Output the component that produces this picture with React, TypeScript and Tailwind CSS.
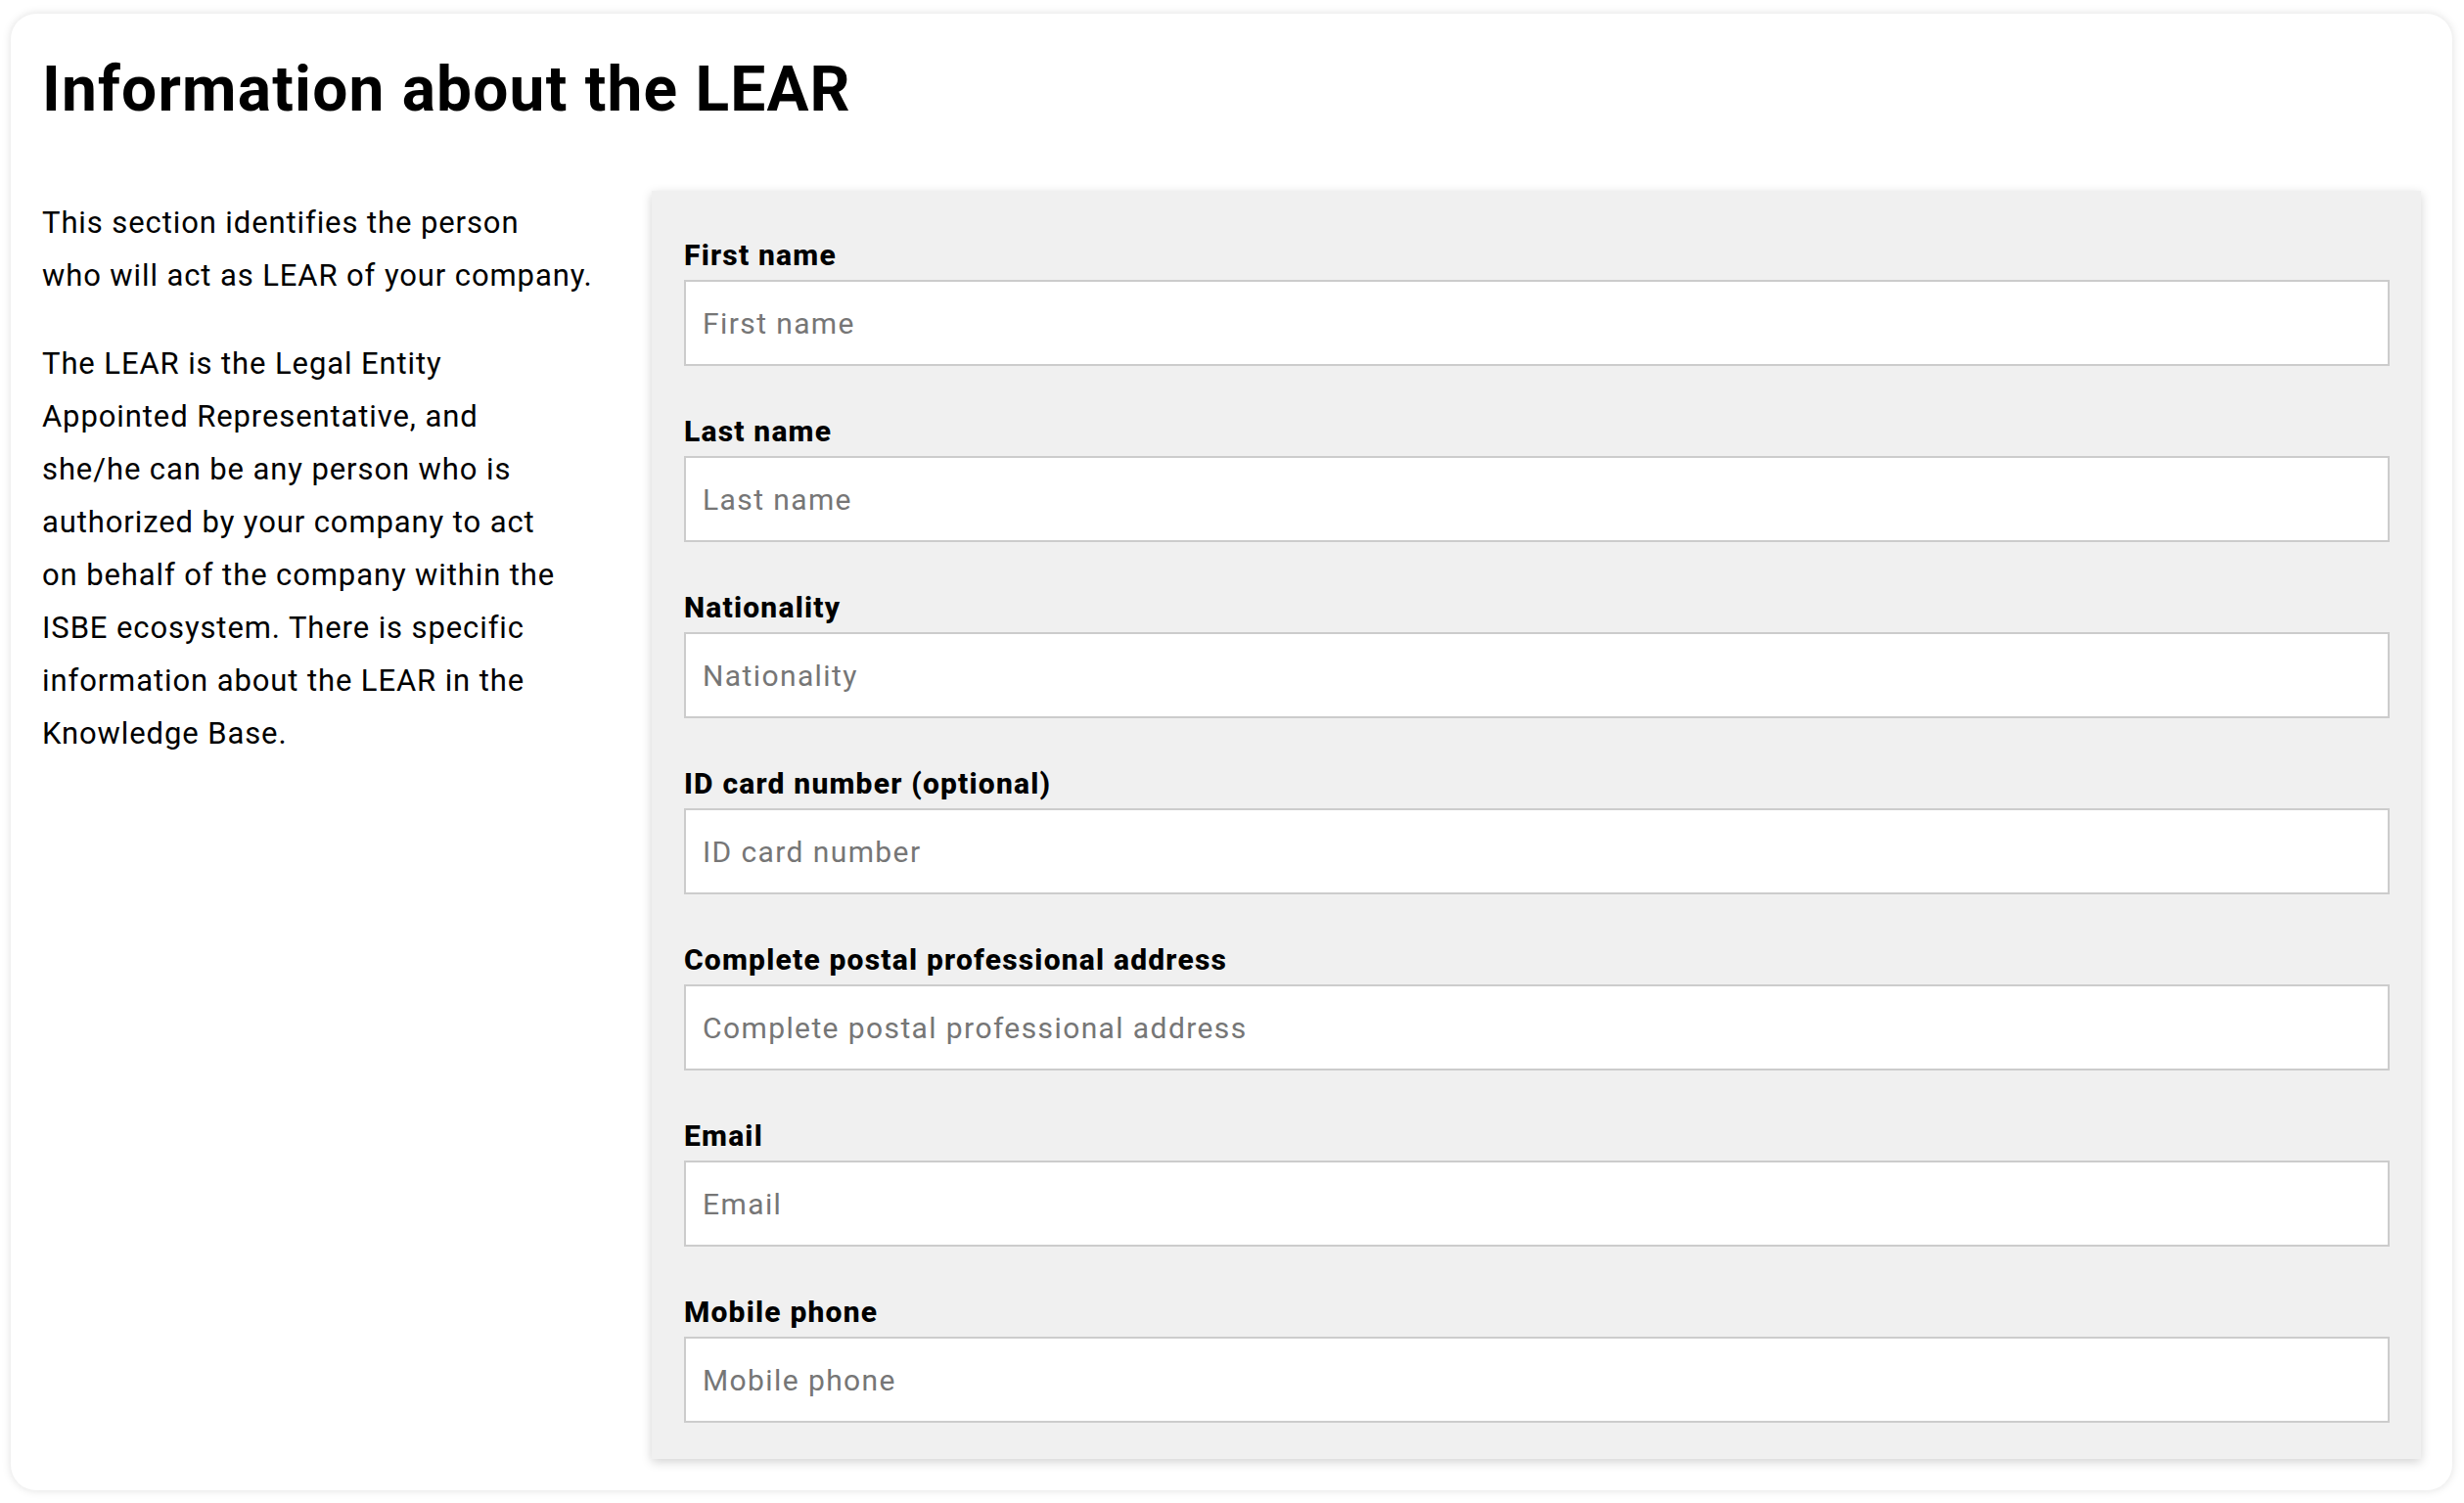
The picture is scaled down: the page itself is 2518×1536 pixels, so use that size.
import React from "react";

const fields = [
  { label: "First name", placeholder: "First name" },
  { label: "Last name", placeholder: "Last name" },
  { label: "Nationality", placeholder: "Nationality" },
  { label: "ID card number (optional)", placeholder: "ID card number" },
  { label: "Complete postal professional address", placeholder: "Complete postal professional address" },
  { label: "Email", placeholder: "Email" },
  { label: "Mobile phone", placeholder: "Mobile phone" },
];

function Field({ label, placeholder }: { label: string; placeholder: string }) {
  return (
    <div className="flex flex-col">
      <label className="block text-[30px] leading-[36px] font-extrabold tracking-[1.2px] text-black whitespace-nowrap">
        {label}
      </label>
      <input
        type="text"
        placeholder={placeholder}
        className="mt-[7px] h-[88px] w-full border-2 border-[#cccccc] bg-white px-[17px] text-[30px] tracking-[1.4px] text-black outline-none placeholder:text-[#767676]"
      />
    </div>
  );
}

export default function App() {
  return (
    <div className="min-h-screen bg-white pt-[14px] pl-[11px] pr-[12px] pb-[13px] font-['Roboto',sans-serif]">
      <div className="rounded-[26px] bg-white px-[32px] pt-[46px] pb-[32px] shadow-[0_0_10px_rgba(0,0,0,0.13)]">
        <h1 className="text-[64px] leading-[64px] font-bold tracking-[1.2px] text-black">Information about the LEAR</h1>
        <div className="mt-[71px] flex">
          <div className="w-[623px] shrink-0 pt-[6px] text-[31px] leading-[54px] tracking-[0.9px] text-black">
            <p className="whitespace-nowrap">
              This section identifies the person
              <br />
              who will act as LEAR of your company.
            </p>
            <p className="mt-[36px] whitespace-nowrap">
              The LEAR is the Legal Entity
              <br />
              Appointed Representative, and
              <br />
              she/he can be any person who is
              <br />
              authorized by your company to act
              <br />
              on behalf of the company within the
              <br />
              ISBE ecosystem. There is specific
              <br />
              information about the LEAR in the
              <br />
              Knowledge Base.
            </p>
          </div>
          <div className="flex flex-1 flex-col gap-[49px] bg-[#f0f0f0] pl-[33px] pr-[32px] pt-[48px] pb-[37px] shadow-[0_3px_10px_rgba(0,0,0,0.18)]">
            {fields.map((f) => (
              <Field key={f.label} label={f.label} placeholder={f.placeholder} />
            ))}
          </div>
        </div>
      </div>
    </div>
  );
}
